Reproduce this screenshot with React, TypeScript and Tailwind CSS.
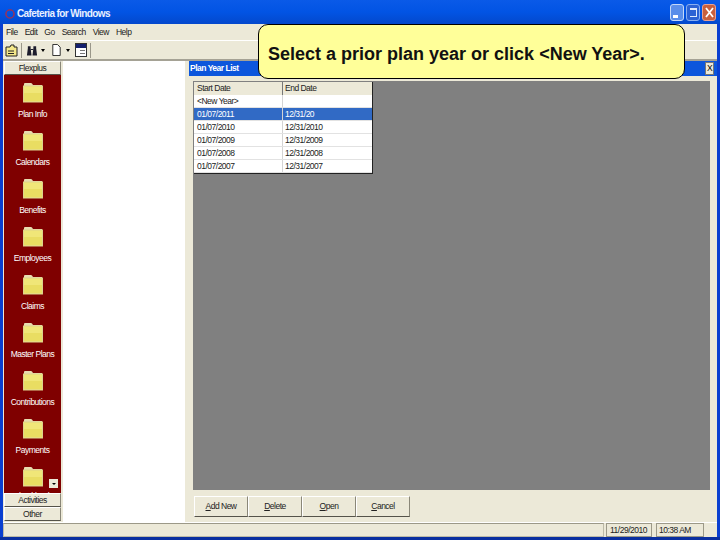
import { Fragment } from "react";

const raised =
  "border border-t-white border-l-white border-r-[#8a8778] border-b-[#55534a] bg-[#ece9d8]";

const outlookItems = [
  "Plan Info",
  "Calendars",
  "Benefits",
  "Employees",
  "Claims",
  "Master Plans",
  "Contributions",
  "Payments",
];

const rows = [
  { start: "<New Year>", end: "" },
  { start: "01/07/2011", end: "12/31/20", selected: true },
  { start: "01/07/2010", end: "12/31/2010" },
  { start: "01/07/2009", end: "12/31/2009" },
  { start: "01/07/2008", end: "12/31/2008" },
  { start: "01/07/2007", end: "12/31/2007" },
];

const Folder = () => (
  <svg width="20" height="21" viewBox="0 0 20 21" className="block shrink-0">
    <path d="M1 4 L1 2 Q1 1 2 1 L8 1 Q9 1 10 3 L19 3 L19 5 L1 5 Z" fill="#e8dcb0" />
    <rect x="0.5" y="4" width="19" height="16" fill="#f0e678" stroke="#ddd28c" />
    <rect x="1" y="11" width="18" height="8" fill="#e9dd62" />
  </svg>
);

const WinButton = ({ kind }: { kind: "min" | "max" | "close" }) => (
  <div
    className={`flex h-[17px] w-[14px] items-center justify-center rounded-[3px] border ${
      kind === "close"
        ? "border-[#e8a090] bg-[#c8603e]"
        : kind === "min"
          ? "border-[#c4d8f8] bg-[#5a8eea]"
          : "border-[#88aef0] bg-[#2c62d4]"
    }`}
  >
    {kind === "min" && <div className="mt-[9px] mr-[3px] h-[3px] w-[5px] bg-white" />}
    {kind === "max" && <div className="h-[9px] w-[7px] border border-t-[2px] border-l-0 border-[#dfe9fb]" />}
    {kind === "close" && (
      <svg width="9" height="11" viewBox="0 0 9 11">
        <path d="M1 1 L8 10 M8 1 L1 10" stroke="#fff" strokeWidth="1.800" />
      </svg>
    )}
  </div>
);

const MenuBar = () => (
  <div className="flex h-[16px] items-center gap-[7px] pl-[3px] text-[#222]">
    {["File", "Edit", "Go", "Search", "View", "Help"].map((m) => (
      <span key={m}>{m}</span>
    ))}
  </div>
);

const Toolbar = () => (
  <div className="flex h-[19px] items-center border-t border-white pl-[2px]">
    <svg width="13" height="13" viewBox="0 0 13 13">
      <path d="M1 3 L5 3 L6 1 L9 1 L9 3 L12 3 L12 12 L1 12 Z" fill="#f4e88a" stroke="#222" />
      <path d="M3 7 H9 M3 9.500 H9" stroke="#222" />
    </svg>
    <div className="ml-[3px] h-[15px] w-px bg-[#9a978a]" />
    <svg width="12" height="13" viewBox="0 0 13 13" className="ml-[4px]">
      <path d="M1 12 L2 4 L5 4 L6 12 Z M7 12 L8 4 L11 4 L12 12 Z M2 2 H5 V6 H8 V2 H11 V5 H2 Z" fill="#1c1c2c" />
    </svg>
    <span className="ml-[3px] h-0 w-0 border-x-[2px] border-t-[3px] border-x-transparent border-t-black" />
    <svg width="9" height="12" viewBox="0 0 9 13" className="ml-[7px]">
      <path d="M0.500 0.500 H5.500 L8.500 3.500 V12.500 H0.500 Z" fill="#fff" stroke="#222" />
    </svg>
    <span className="ml-[5px] h-0 w-0 border-x-[2px] border-t-[3px] border-x-transparent border-t-black" />
    <div className="ml-[5px] flex h-[14px] w-[12px] flex-col border border-[#333] bg-white">
      <div className="h-[4px] bg-[#14206e]" />
      <div className="mt-[2px] ml-[4px] h-px w-[5px] bg-[#777]" />
      <div className="mt-[2px] ml-[4px] h-px w-[5px] bg-[#777]" />
    </div>
    <div className="ml-[3px] h-[15px] w-px bg-[#9a978a]" />
  </div>
);

const Sidebar = () => (
  <div className="flex w-[57px] shrink-0 flex-col">
    <div className={`flex h-[14px] shrink-0 items-center justify-center text-[#222] ${raised}`}>Flexplus</div>
    <div className="relative flex flex-1 flex-col items-center overflow-hidden bg-[#7f0000] pt-[7px]">
      {outlookItems.map((label) => (
        <Fragment key={label}>
          <Folder />
          <div className="mt-[6px] mb-[11px] h-[10px] shrink-0 whitespace-nowrap leading-[10px] text-white">{label}</div>
        </Fragment>
      ))}
      <Folder />
      <div className="mt-[4px] h-[10px] shrink-0 whitespace-nowrap leading-[10px] text-white">Checkbook</div>
      <div className="absolute right-[3px] bottom-[5px] flex h-[9px] w-[9px] items-center justify-center bg-[#ece9d8]">
        <span className="h-0 w-0 border-x-[2px] border-t-[2px] border-x-transparent border-t-black" />
      </div>
    </div>
    <div className={`flex h-[14px] shrink-0 items-center justify-center text-[#222] ${raised}`}>Activities</div>
    <div className={`flex h-[14px] shrink-0 items-center justify-center text-[#222] ${raised}`}>Other</div>
    <div className="h-px shrink-0" />
  </div>
);

const YearTable = () => (
  <div className="mt-px ml-px w-[179px] border-r border-b border-[#222] bg-white text-[#222]">
    <div className="grid h-[13px] grid-cols-[89px_1fr] bg-[#ece9d8]">
      <div className="border-r border-[#777] pl-[3px] leading-[13px]">Start Date</div>
      <div className="pl-[2px] leading-[13px]">End Date</div>
    </div>
    {rows.map((r) => (
      <div
        key={r.start}
        className={`grid h-[13px] grid-cols-[89px_1fr] border-b border-[#e2e2e2] leading-[12px] ${
          r.selected ? "bg-[#316ac5] text-white" : ""
        }`}
      >
        <div className="border-r border-[#d4d4d4] pl-[3px]">{r.start}</div>
        <div className="pl-[2px]">{r.end}</div>
      </div>
    ))}
  </div>
);

const PlanYearList = () => (
  <div className="flex min-w-0 flex-1 flex-col">
    <div className="flex h-[15px] shrink-0 items-center justify-between bg-[#0c56dc] pr-[3px] pl-px font-bold text-white">
      <span>Plan Year List</span>
      <div className="flex h-[13px] w-[9px] items-center justify-center border border-[#777] bg-[#ece9d8] font-normal leading-none text-black">
        X
      </div>
    </div>
    <div className="mt-[5px] mr-[7px] ml-[4px] flex flex-1 flex-col items-start bg-[#808080]">
      <YearTable />
    </div>
    <div className="flex h-[32px] shrink-0 items-start pt-[6px] pl-[5px] text-[#222]">
      {[
        ["A", "dd New"],
        ["D", "elete"],
        ["O", "pen"],
        ["C", "ancel"],
      ].map(([k, rest]) => (
        <div key={k} className={`flex h-[21px] w-[54px] items-center justify-center ${raised}`}>
          <span>
            <span className="underline">{k}</span>
            {rest}
          </span>
        </div>
      ))}
    </div>
  </div>
);

const StatusBar = () => (
  <div className="flex h-[15px] shrink-0 items-stretch border-t border-white pr-[13px] text-[#222]">
    <div className="flex-1 border border-[#bdbaa8] border-t-[#9c9988]" />
    <div className="ml-[2px] w-[46px] border border-[#9c9988] pl-[3px] leading-[12px]">11/29/2010</div>
    <div className="ml-[4px] w-[48px] border border-[#9c9988] pl-[2px] leading-[12px]">10:38 AM</div>
  </div>
);

export default function App() {
  return (
    <div className="relative flex h-[540px] w-[720px] flex-col overflow-hidden bg-[#0a3fd0] font-['Liberation_Sans',Arial,sans-serif] text-[8.500px] tracking-[-0.5px]">
      <div className="flex h-[24px] shrink-0 items-center justify-between bg-gradient-to-b from-[#0a5ae8] via-[#0254e4] to-[#0348cc] pr-[4px] pl-[5px]">
        <div className="flex items-center gap-[2px] pt-[3px]">
          <svg width="10" height="14" viewBox="0 0 11 14">
            <circle cx="5.500" cy="7" r="4.500" fill="none" stroke="#a8304a" strokeWidth="1.500" />
          </svg>
          <span className="text-[10px] font-bold tracking-[-0.6px] text-[#e8f0ff]">Cafeteria for Windows</span>
        </div>
        <div className="flex gap-[2px]">
          <WinButton kind="min" />
          <WinButton kind="max" />
          <WinButton kind="close" />
        </div>
      </div>
      <div className="mx-[3px] flex min-h-0 flex-1 flex-col bg-[#ece9d8]">
        <MenuBar />
        <Toolbar />
        <div className="flex min-h-0 flex-1 border-t-2 border-[#a5a295] pl-px">
          <Sidebar />
          <div className="ml-[2px] w-[122px] shrink-0 bg-white" />
          <div className="ml-[4px] flex min-w-0 flex-1">
            <PlanYearList />
          </div>
        </div>
        <StatusBar />
      </div>
      <div className="h-[3px] shrink-0 bg-[#0a2fa0]" />

      <div className="absolute top-[24px] left-[258px] flex h-[55px] w-[427px] items-center rounded-[10px] border border-black bg-[#ffff99] pt-[6px] pl-[9px] text-[18px] font-bold tracking-normal text-[#111]">
        Select a prior plan year or click &lt;New Year&gt;.
      </div>
    </div>
  );
}
